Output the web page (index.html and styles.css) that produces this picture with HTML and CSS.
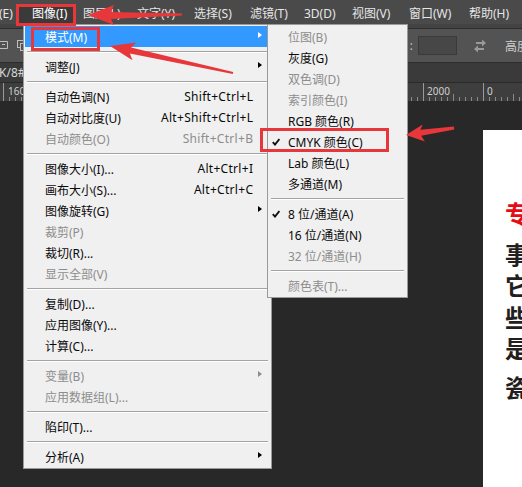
FILE: index.html
```html
<!DOCTYPE html>
<html lang="zh-CN">
<head>
<meta charset="utf-8">
<title>Photoshop 图像菜单</title>
<link rel="stylesheet" href="styles.css">
</head>
<body>
<div class="app">
  <div class="menubar">
    <div class="mb-item">编辑(E)</div>
    <div class="mb-item active">图像(I)</div>
    <div class="mb-item">图层(L)</div>
    <div class="mb-item">文字(Y)</div>
    <div class="mb-item">选择(S)</div>
    <div class="mb-item">滤镜(T)</div>
    <div class="mb-item">3D(D)</div>
    <div class="mb-item">视图(V)</div>
    <div class="mb-item">窗口(W)</div>
    <div class="mb-item">帮助(H)</div>
  </div>
  <div class="strip"></div>
  <div class="options">
    <div class="opt-left">
      <svg class="tool" width="9" height="10" viewBox="0 0 9 10"><path d="M-1 1.5h8.5v7H-1" fill="none" stroke="#bdbdbd"/><path d="M2 4.5h3" stroke="#bdbdbd"/></svg>
      <svg class="tool tool2" width="11" height="11" viewBox="0 0 11 11"><rect x="0.5" y="0.5" width="7" height="7" fill="none" stroke="#bdbdbd"/><rect x="3.5" y="3.5" width="7" height="7" fill="#535353" stroke="#bdbdbd"/></svg>
    </div>
    <div class="opt-right">
      <span class="colon">:</span>
      <span class="field"></span>
      <svg class="swap" width="14" height="15" viewBox="0 0 14 15"><path d="M3 4h6V1.5L13 5l-4 3.5V6H3z M11 10H5V7.5L1 11l4 3.5V12h6z" fill="#9a9a9a"/></svg>
      <span class="opt-label">高度</span>
    </div>
  </div>
  <div class="tabbar"><span class="tab-text">K/8#</span></div>
  <div class="ruler">
    <span class="rl rl-160">160</span>
    <span class="rl rl-2000">2000</span>
    <span class="rl rl-0">0</span>
  </div>
  <div class="canvas">
    <div class="doc">
      <div class="doc-title">专</div>
      <div class="doc-para">
        <div>事</div>
        <div>它</div>
        <div>些</div>
        <div>是</div>
      </div>
      <div class="doc-para">
        <div>瓷</div>
      </div>
    </div>
  </div>

  <div class="menu menu-main">
    <div class="item hl"><span>模式(M)</span><i class="arr"></i></div>
    <div class="sep"></div>
    <div class="item"><span>调整(J)</span><i class="arr"></i></div>
    <div class="sep"></div>
    <div class="item"><span>自动色调(N)</span><span class="key">Shift+Ctrl+L</span></div>
    <div class="item"><span>自动对比度(U)</span><span class="key">Alt+Shift+Ctrl+L</span></div>
    <div class="item dis"><span>自动颜色(O)</span><span class="key">Shift+Ctrl+B</span></div>
    <div class="sep"></div>
    <div class="item"><span>图像大小(I)...</span><span class="key">Alt+Ctrl+I</span></div>
    <div class="item"><span>画布大小(S)...</span><span class="key">Alt+Ctrl+C</span></div>
    <div class="item"><span>图像旋转(G)</span><i class="arr"></i></div>
    <div class="item dis"><span>裁剪(P)</span></div>
    <div class="item"><span>裁切(R)...</span></div>
    <div class="item dis"><span>显示全部(V)</span></div>
    <div class="sep"></div>
    <div class="item"><span>复制(D)...</span></div>
    <div class="item"><span>应用图像(Y)...</span></div>
    <div class="item"><span>计算(C)...</span></div>
    <div class="sep"></div>
    <div class="item dis"><span>变量(B)</span><i class="arr"></i></div>
    <div class="item dis"><span>应用数据组(L)...</span></div>
    <div class="sep"></div>
    <div class="item"><span>陷印(T)...</span></div>
    <div class="sep"></div>
    <div class="item"><span>分析(A)</span><i class="arr"></i></div>
  </div>

  <div class="menu menu-sub">
    <div class="item dis"><span>位图(B)</span></div>
    <div class="item"><span>灰度(G)</span></div>
    <div class="item dis"><span>双色调(D)</span></div>
    <div class="item dis"><span>索引颜色(I)</span></div>
    <div class="item"><span>RGB 颜色(R)</span></div>
    <div class="item"><svg class="chk" width="8" height="8" viewBox="0 0 8 8"><path d="M0.8 4.2 L3 6.6 L7.4 1" fill="none" stroke="#111" stroke-width="1.9"/></svg><span>CMYK 颜色(C)</span></div>
    <div class="item"><span>Lab 颜色(L)</span></div>
    <div class="item"><span>多通道(M)</span></div>
    <div class="sep"></div>
    <div class="item"><svg class="chk" width="8" height="8" viewBox="0 0 8 8"><path d="M0.8 4.2 L3 6.6 L7.4 1" fill="none" stroke="#111" stroke-width="1.9"/></svg><span>8 位/通道(A)</span></div>
    <div class="item"><span>16 位/通道(N)</span></div>
    <div class="item dis"><span>32 位/通道(H)</span></div>
    <div class="sep"></div>
    <div class="item dis"><span>颜色表(T)...</span></div>
  </div>

  <div class="mark mark-mb"></div>
  <div class="mark mark-mode"></div>
  <div class="mark mark-cmyk"></div>

  <svg class="arrows" width="522" height="487" viewBox="0 0 522 487">
    <polygon points="88,15 114,5 111,12 182,13.5 182,15.5 111,19 114,25" fill="#e8373a"/>
    <polygon points="110,46 136.3,42.6 131.1,47.6 233.2,72 232.8,74 129.9,53.4 132.5,60.2" fill="#e8373a"/>
    <polygon points="406,135 422.7,124.5 420.4,129.8 454,126.5 454.2,129.5 421.2,135.8 424.9,141.5" fill="#e8373a"/>
  </svg>
</div>
</body>
</html>
```
FILE: styles.css
```css
* { box-sizing: border-box; }

body {
  margin: 0;
  background: #282828;
  font-family: "Noto Sans", "Noto Sans CJK SC", sans-serif;
  font-size: 12px;
}

.app {
  position: relative;
  width: 522px;
  height: 487px;
  overflow: hidden;
  display: flex;
  flex-direction: column;
  background: #282828;
}

/* ---------- menu bar ---------- */
.menubar {
  flex: none;
  height: 24px;
  margin-left: -33px;
  background: #4a4a4a;
  color: #e6e6e6;
  display: grid;
  grid-template-columns: 52px 56px 54px 57px 56px 54px 48px 57px 60px 1fr;
}

.mb-item {
  padding: 4px 0 0 8px;
  line-height: 20px;
  white-space: nowrap;
}

.mb-item.active {
  padding-left: 13px;
  background: linear-gradient(#3a3a3a, #3a3a3a) no-repeat 0 6px / 100% 18px;
  color: #fff;
}

.strip {
  flex: none;
  height: 5px;
  background: #434343;
  border-bottom: 1px solid #2d2d2d;
}

/* ---------- options bar ---------- */
.options {
  flex: none;
  height: 34px;
  background: #535353;
  border-bottom: 1px solid #2c2c2c;
  display: flex;
  align-items: center;
}

.opt-left {
  display: flex;
  align-items: center;
  gap: 8px;
  margin-top: -2px;
}

.tool2 { margin-top: 1px; }

.opt-right {
  margin-left: auto;
  margin-right: -7px;
  display: flex;
  align-items: center;
  color: #cfcfcf;
  white-space: nowrap;
}

.colon {
  font-size: 13px;
  line-height: 1;
  margin-right: 5px;
  color: #bbb;
}

.field {
  width: 39px;
  height: 19px;
  background: #474747;
  border: 1px solid #3a3a3a;
}

.swap { margin-left: 16px; }

.opt-label {
  margin-left: 18px;
  font-size: 12px;
  color: #d0d0d0;
}

/* ---------- document tab ---------- */
.tabbar {
  flex: none;
  height: 20px;
  background: #3a3a3a;
  border-bottom: 1px solid #2a2a2a;
  color: #d8d8d8;
  line-height: 19px;
  white-space: nowrap;
}

.tab-text { margin-left: -1px; }

/* ---------- ruler ---------- */
.ruler {
  flex: none;
  position: relative;
  height: 18px;
  background-color: #3e3e3e;
  background-image:
    linear-gradient(90deg, #9a9a9a 0 1px, transparent 1px),
    linear-gradient(90deg, #8a8a8a 0 1px, transparent 1px),
    linear-gradient(90deg, #8a8a8a 0 1px, transparent 1px);
  background-size: 60px 100%, 30px 7px, 6px 4px;
  background-position: 423px 0, 423px 100%, 423px 100%;
  background-repeat: repeat-x;
  color: #cfcfcf;
  font-size: 10px;
}

.rl {
  position: absolute;
  top: 2px;
  line-height: 12px;
}

.rl-160 { left: 8px; }
.rl-2000 { left: 427px; }
.rl-0 { left: 487px; }

/* ---------- canvas ---------- */
.canvas {
  flex: 1;
  display: flex;
  justify-content: flex-end;
  padding-top: 29px;
  background: #282828;
}

.doc {
  width: 39px;
  background: #fff;
  padding: 67px 0 0 22px;
  overflow: hidden;
  font-family: "Noto Sans CJK SC", sans-serif;
  font-size: 24px;
  font-weight: 700;
  line-height: 31.5px;
  color: #231f20;
  white-space: nowrap;
}

.doc-title {
  color: #e60c16;
  margin-bottom: 9px;
}

.doc-para + .doc-para { margin-top: 7px; }

/* ---------- menus ---------- */
.menu {
  position: absolute;
  top: 24px;
  background: #f0f0f0;
  border: 1px solid #9a9a9a;
  padding: 1px;
  color: #0a0a0a;
}

.menu-main {
  left: 23px;
  width: 249px;
}

.menu-sub {
  left: 267px;
  width: 141px;
}

.item {
  height: 21px;
  display: flex;
  align-items: center;
  padding: 0 17px 0 20px;
  white-space: nowrap;
}

.menu-sub .item { padding-left: 19px; }

.item.hl {
  background: #3399ff;
  color: #fff;
}

.item.dis { color: #8d8d8d; }

.key {
  margin-left: auto;
  letter-spacing: 0.3px;
  margin-right: -0.3px;
}

.arr {
  margin-left: auto;
  margin-right: -9px;
  margin-bottom: 4px;
  width: 0;
  height: 0;
  border-left: 4px solid #000;
  border-top: 3.5px solid transparent;
  border-bottom: 3.5px solid transparent;
}

.hl .arr { border-left-color: #fff; }
.dis .arr { border-left-color: #8d8d8d; }

.chk {
  flex: none;
  margin-left: -16px;
  margin-right: 8px;
}

.sep {
  height: 2px;
  margin: 4px 2px 3px;
  border-top: 1px solid #a3a3a3;
  border-bottom: 1px solid #fff;
}

/* ---------- annotations ---------- */
.mark {
  position: absolute;
  border: 3px solid #e8373a;
}

.mark-mb { left: 16px; top: 4px; width: 60px; height: 22px; }
.mark-mode { left: 31px; top: 27px; width: 69px; height: 24px; }
.mark-cmyk { left: 260px; top: 128px; width: 129px; height: 24px; }

.arrows {
  position: absolute;
  left: 0;
  top: 0;
  pointer-events: none;
}
```
